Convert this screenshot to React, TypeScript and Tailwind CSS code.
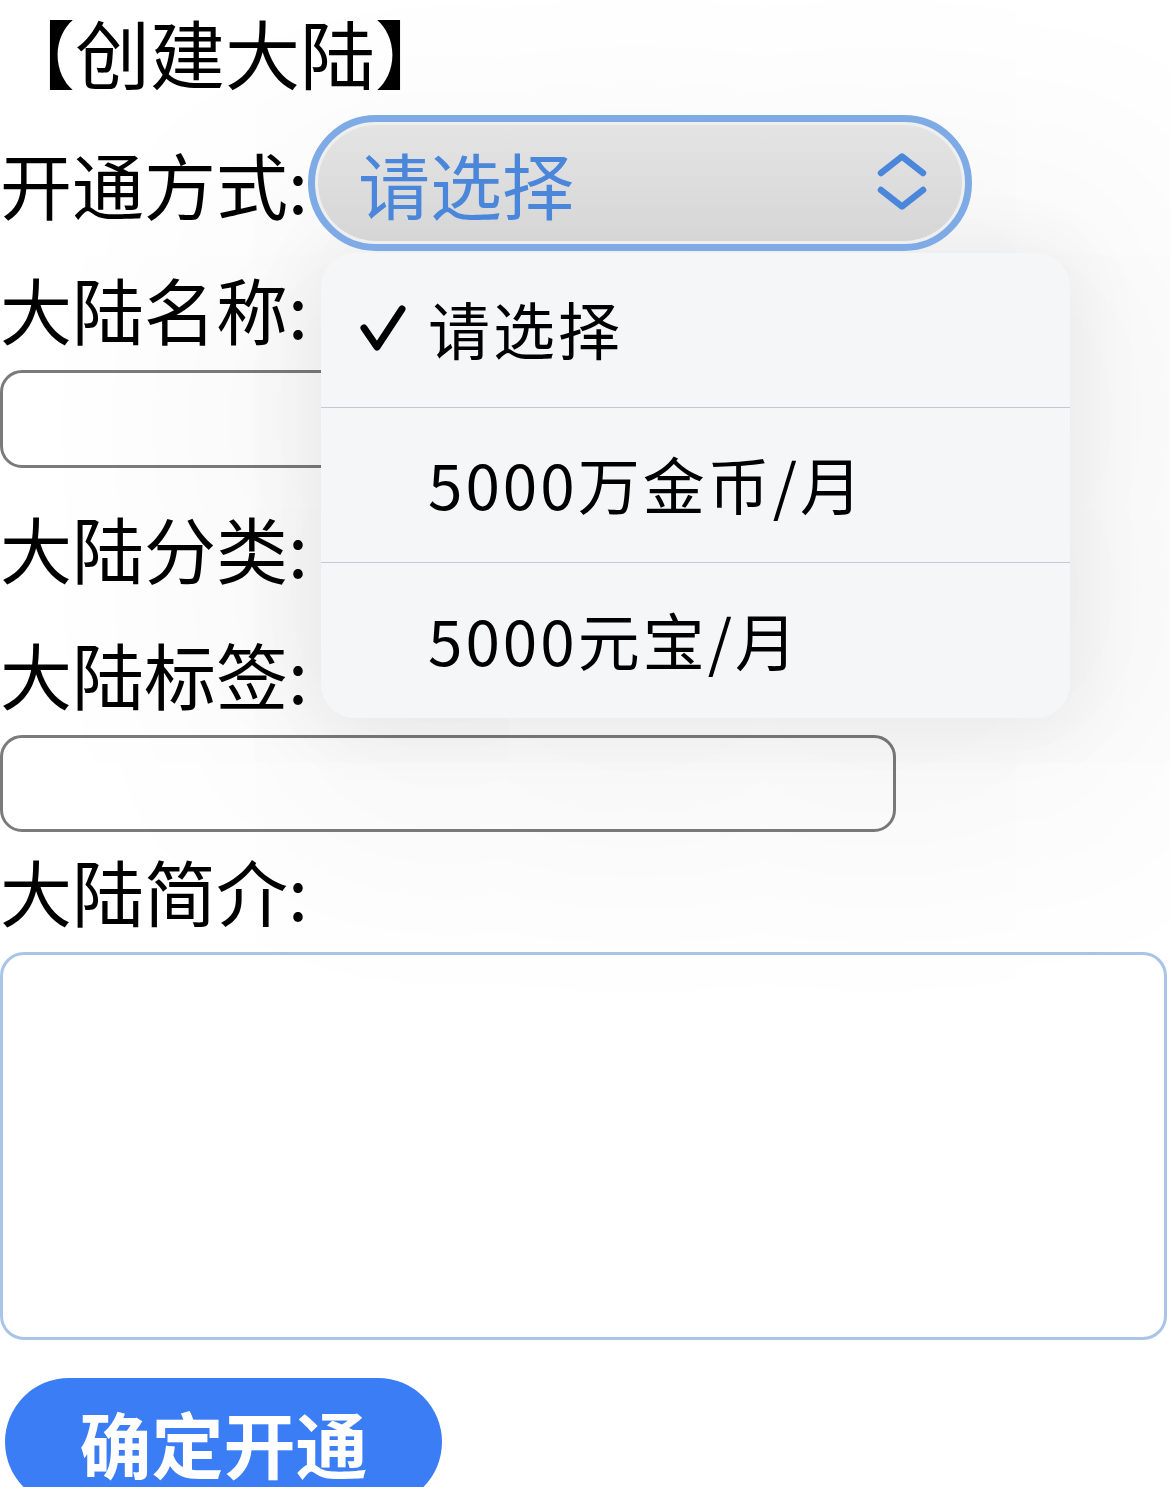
import React from "react";

const options = [
  { label: "请选择", checked: true },
  { label: "5000万金币/月", checked: false },
  { label: "5000元宝/月", checked: false },
];

function Chevrons() {
  return (
    <svg width="52" height="60" viewBox="0 0 52 60" fill="none">
      <path
        d="M5 20 L26 3.5 L47 20"
        stroke="#4a86da"
        strokeWidth="6.5"
        strokeLinecap="round"
        strokeLinejoin="round"
      />
      <path
        d="M5 37 L26 53.5 L47 37"
        stroke="#4a86da"
        strokeWidth="6.5"
        strokeLinecap="round"
        strokeLinejoin="round"
      />
    </svg>
  );
}

function Check() {
  return (
    <svg width="48" height="48" viewBox="0 0 48 48" fill="none">
      <path
        d="M5 24 L18 43 L43 5"
        stroke="#000"
        strokeWidth="7"
        strokeLinecap="round"
        strokeLinejoin="round"
      />
    </svg>
  );
}

export default function App() {
  return (
    <div className="relative h-[1487px] w-[1170px] overflow-hidden bg-white font-['Noto_Sans_CJK_SC','Noto_Sans',sans-serif] text-black">
      <h1 className="h-[115px] whitespace-nowrap text-[75px] font-normal leading-[104px]">【创建大陆】</h1>

      {/* 开通方式 */}
      <div className="relative z-20 flex h-[136px] items-center">
        <span className="w-[308px] shrink-0 whitespace-nowrap text-[72px] leading-none">开通方式:</span>
        <div className="h-[136px] w-[664px] shrink-0 rounded-full border-[7px] border-[#7eaae6] bg-[#efefef] p-[3px]">
          <div className="flex h-full items-center justify-between rounded-full bg-gradient-to-b from-[#e4e4e4] to-[#d6d6d6] pl-[40px] pr-[34px]">
            <span className="text-[72px] leading-none text-[#4a86da]">请选择</span>
            <Chevrons />
          </div>
        </div>
      </div>

      <div className="mt-[7px] h-[100px] whitespace-nowrap text-[72px] leading-[100px]">大陆名称:</div>
      <div className="mt-[12px] h-[98px] w-[896px] rounded-[22px] border-[3px] border-[#7b7b7b]" />

      <div className="mt-[29px] h-[100px] whitespace-nowrap text-[72px] leading-[100px]">大陆分类:</div>

      <div className="mt-[26px] h-[100px] whitespace-nowrap text-[72px] leading-[100px]">大陆标签:</div>
      <div className="mt-[12px] h-[97px] w-[896px] rounded-[22px] border-[3px] border-[#7b7b7b]" />

      <div className="mt-[8px] h-[100px] whitespace-nowrap text-[72px] leading-[100px]">大陆简介:</div>
      <div className="mt-[12px] h-[388px] w-[1167px] rounded-[24px] border-[3px] border-[#a8c4e6]" />

      <button className="ml-[5px] mt-[38px] flex h-[128px] w-[437px] items-start justify-center rounded-full bg-[#3a7df5] pt-[28px] text-[72px] font-bold leading-none text-white">
        确定开通
      </button>

      {/* open select menu */}
      <div className="absolute left-[321px] top-[253px] z-10 w-[749px] overflow-hidden rounded-[34px] bg-[#f5f6f7] shadow-[0_10px_260px_80px_rgba(0,0,0,0.06),0_4px_70px_10px_rgba(0,0,0,0.06)]">
        {options.map((o, i) => (
          <div
            key={o.label}
            className={`flex h-[155px] items-center pb-[4px] pl-[38px] ${i < options.length - 1 ? "border-b border-[#c8c9cc]" : ""}`}
          >
            <span className="flex w-[69px] items-center">{o.checked && <Check />}</span>
            <span className="whitespace-nowrap text-[62px] leading-none tracking-[3px]">{o.label}</span>
          </div>
        ))}
      </div>
    </div>
  );
}
